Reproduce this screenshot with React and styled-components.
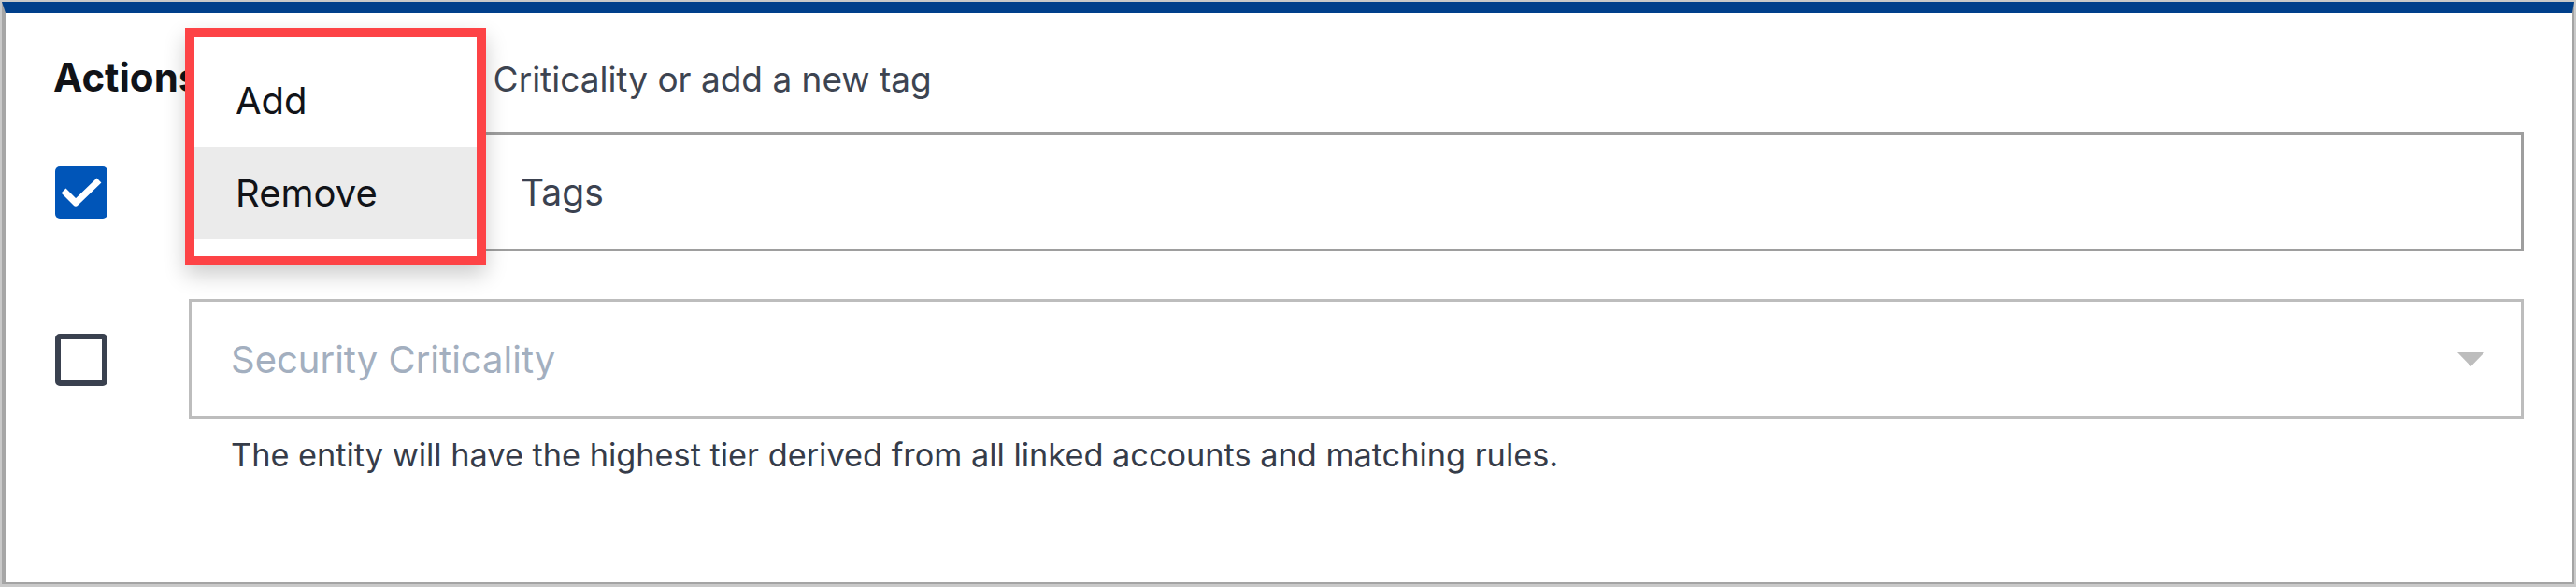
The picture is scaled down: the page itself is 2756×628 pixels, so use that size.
import React from 'react'
import styled, { createGlobalStyle } from 'styled-components'

const GlobalStyle = createGlobalStyle`
  html, body {
    margin: 0;
    padding: 0;
    background: #c9c9c9;
  }
  body {
    font-family: 'Inter', 'Noto Sans', sans-serif;
  }
  #root {
    padding: 2px 2px 3px 2px;
  }
`

function CheckIcon() {
  return (
    <svg width="56" height="56" viewBox="0 0 56 56">
      <path d="M9 26 L22 39 L47 15" fill="none" stroke="#fff" strokeWidth="7" strokeLinejoin="round" />
    </svg>
  )
}

function Caret({ color }) {
  return (
    <svg width="29" height="15" viewBox="0 0 29 15">
      <path d="M0 0 H29 L14.5 15 Z" fill={color} />
    </svg>
  )
}

function App() {
  return (
    <>
      <GlobalStyle />
      <Card>
        <Header>
          <Title>Actions</Title>
          <Hint>Select Security Criticality or add a new tag</Hint>
        </Header>

        <Rows>
          <Checkbox checked>
            <CheckIcon />
          </Checkbox>
          <TagsField>
            <ModeButton>
              Remove
              <Caret color="#9e9e9e" />
            </ModeButton>
            <FieldText>Tags</FieldText>
          </TagsField>

          <Spacer />
          <Spacer />

          <Checkbox />
          <div>
            <Select>
              <Placeholder>Security Criticality</Placeholder>
              <Caret color="#bdbdbd" />
            </Select>
            <Help>The entity will have the highest tier derived from all linked accounts and matching rules.</Help>
          </div>
        </Rows>

        <Menu>
          <MenuItem>Add</MenuItem>
          <MenuItem active>Remove</MenuItem>
        </Menu>
      </Card>
    </>
  )
}

export default App

const Card = styled.div`
  position: relative;
  box-sizing: border-box;
  height: 623px;
  background: #fff;
  border-top: 12px solid #003f8b;
  border-left: 4px solid #a6a6a6;
  border-right: 2px solid #a4a4a4;
  border-bottom: 2px solid #a4a4a4;
  padding: 45px 52px 0 53px;
`

const Header = styled.div`
  line-height: 48px;
  white-space: nowrap;
`

const Title = styled.span`
  font-size: 42px;
  font-weight: 700;
  color: #111318;
  margin-right: 38px;
  margin-left: -2px;
`

const Hint = styled.span`
  font-size: 37px;
  font-weight: 400;
  color: #3d4451;
`

const Rows = styled.div`
  display: grid;
  grid-template-columns: 56px 1fr;
  column-gap: 87px;
  align-items: start;
  margin-top: 25px;
`

const Spacer = styled.div`
  height: 51px;
`

const Checkbox = styled.div`
  box-sizing: border-box;
  width: 56px;
  height: 56px;
  margin-top: 37px;
  border-radius: 5px;
  display: flex;
  align-items: center;
  justify-content: center;
  background: ${p => (p.checked ? '#0055b8' : '#fff')};
  border: ${p => (p.checked ? 'none' : '6px solid #3a414f')};
`

const TagsField = styled.div`
  box-sizing: border-box;
  height: 128px;
  display: flex;
  align-items: center;
  border: 3px solid #9e9e9e;
`

const ModeButton = styled.div`
  box-sizing: border-box;
  width: 315px;
  height: 100%;
  display: flex;
  align-items: center;
  justify-content: space-between;
  padding: 0 30px 0 42px;
  border-right: 3px solid #9e9e9e;
  font-size: 40px;
  color: #3b4250;
`

const FieldText = styled.div`
  padding-left: 37px;
  font-size: 39px;
  color: #3b4250;
`

const Select = styled.div`
  box-sizing: border-box;
  height: 128px;
  display: flex;
  align-items: center;
  justify-content: space-between;
  padding: 0 39px 0 42px;
  border: 3px solid #bdbdbd;
`

const Placeholder = styled.div`
  font-size: 40px;
  color: #a3afbf;
`

const Help = styled.div`
  margin-top: 18px;
  padding-left: 45px;
  font-size: 34.3px;
  line-height: 42px;
  color: #363c49;
`

const Menu = styled.div`
  position: absolute;
  left: 192px;
  top: 16px;
  box-sizing: border-box;
  width: 322px;
  height: 254px;
  padding: 18px 0;
  background: #fff;
  border: 10px solid #fd4346;
  box-shadow: 0 10px 22px rgba(0, 0, 0, 0.2);
`

const MenuItem = styled.div`
  height: 99px;
  display: flex;
  align-items: center;
  padding-left: 44px;
  font-size: 40px;
  color: #111318;
  background: ${p => (p.active ? '#ebebeb' : 'transparent')};
`
